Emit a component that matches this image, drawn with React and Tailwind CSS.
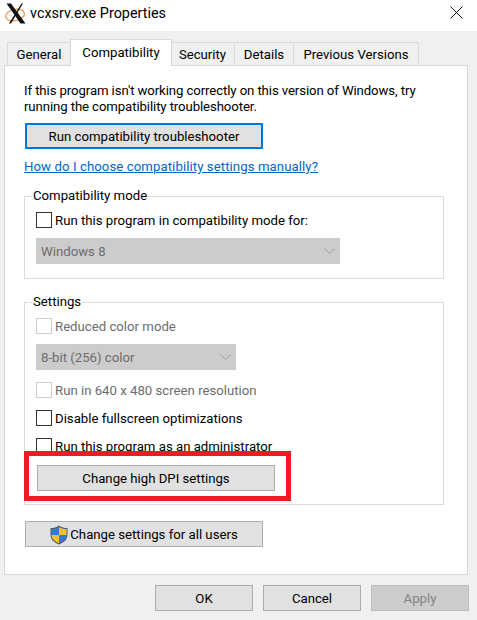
import React from "react";

const font = { fontFamily: 'Roboto, "Liberation Sans", sans-serif' };

const Chevron = () => (
  <svg width="11" height="6" viewBox="0 0 11 6" fill="none" stroke="#9f9f9f" strokeWidth="1">
    <path d="M0.5 0.5 L5.5 5.5 L10.5 0.5" />
  </svg>
);

const XLogo = () => (
  <svg width="22" height="22" viewBox="0 0 22 22" fill="none">
    <ellipse cx="11" cy="13" rx="9.5" ry="5.6" stroke="#ee9c4f" strokeWidth="1.3" transform="rotate(-12 11 13)" />
    <path d="M2.5 1.5 L7 1.5 L21.5 21.5 L16.5 21.5 Z" fill="#111" />
    <path d="M17.5 1.5 L19 1.5 L7 21.5 L5 21.5 Z" fill="#111" />
  </svg>
);

const Shield = () => (
  <svg width="18" height="20" viewBox="0 0 18 20">
    <path d="M9 0.5 C6.5 2.5 3.5 3 0.5 3 L0.5 10 C0.5 14.5 4 17.5 9 19.5 C14 17.5 17.5 14.5 17.5 10 L17.5 3 C14.5 3 11.5 2.5 9 0.5 Z" fill="#4b5f77" />
    <path d="M9 2 C7 3.5 4.5 4 1.5 4 L1.5 10 L9 10 Z" fill="#2a7fd4" />
    <path d="M9 2 C11 3.5 13.5 4 16.5 4 L16.5 10 L9 10 Z" fill="#f5c02e" />
    <path d="M1.5 10 C1.5 13.8 4.6 16.4 9 18.3 L9 10 Z" fill="#f5c02e" />
    <path d="M16.5 10 C16.5 13.8 13.4 16.4 9 18.3 L9 10 Z" fill="#2a7fd4" />
  </svg>
);

function Tab({ label, width, active }) {
  if (active) {
    return (
      <div className="relative z-10 -mb-px -mx-px h-[27px] bg-white border border-b-0 border-[#d9d9d9] flex items-center justify-center text-black pb-[1px]" style={{ width }}>
        {label}
      </div>
    );
  }
  return (
    <div className="h-[23px] bg-[#f0f0f0] border border-b-0 border-[#d9d9d9] -ml-px first:ml-0 flex items-center justify-center text-black pt-[2px]" style={{ width }}>
      {label}
    </div>
  );
}

function Check({ label, disabled }) {
  return (
    <div className={`flex items-center h-4 ${disabled ? "text-[#6d6d6d]" : "text-black"}`}>
      <span className={`w-4 h-4 shrink-0 border bg-white ${disabled ? "border-[#cccccc]" : "border-[#333333]"}`} />
      <span className="ml-[3px] mt-[2px] whitespace-nowrap">{label}</span>
    </div>
  );
}

function Btn({ className = "", tone = "bg-[#e1e1e1] border border-[#adadad] text-black", children }) {
  return (
    <div className={`h-[26px] pt-[2px] flex items-center justify-center whitespace-nowrap ${tone} ${className}`}>
      {children}
    </div>
  );
}

function Combo({ className = "", label }) {
  return (
    <div className={`h-[26px] bg-[#cccccc] flex items-center justify-between pl-[5px] pr-[5px] text-[#6d6d6d] ${className}`}>
      <span className="mt-[2px]">{label}</span>
      <Chevron />
    </div>
  );
}

export default function App() {
  return (
    <div className="w-[477px] h-[620px] overflow-hidden bg-[#f0f0f0] text-[13.2px] leading-4" style={font}>
      {/* Title bar */}
      <div className="h-[31px] bg-white flex items-center pl-1 pr-[14px] pb-[6px]">
        <XLogo />
        <span className="ml-1 mt-[2px] text-[14.4px] text-black">vcxsrv.exe Properties</span>
        <svg className="ml-auto" width="13" height="13" viewBox="0 0 13 13" stroke="#111" strokeWidth="1" fill="none">
          <path d="M0.5 0.5 L12.5 12.5 M12.5 0.5 L0.5 12.5" />
        </svg>
      </div>

      {/* Tabs */}
      <div className="h-[34px] pl-[7px] flex items-end">
        <Tab label="General" width={64} />
        <Tab label="Compatibility" width={102} active />
        <Tab label="Security" width={65} />
        <Tab label="Details" width={60} />
        <Tab label="Previous Versions" width={126} />
      </div>

      {/* Panel */}
      <div className="ml-1 w-[464px] h-[510px] bg-white border border-[#d9d9d9] pl-[19px] pt-[17px]">
        <p className="text-black whitespace-nowrap tracking-[-0.1px]">
          If this program isn't working correctly on this version of Windows, try
          <br />
          running the compatibility troubleshooter.
        </p>
        <Btn className="mt-[8px] ml-px w-[238px]" tone="bg-[#e1e1e1] border-2 border-[#0078d7] text-black">Run compatibility troubleshooter</Btn>
        <a className="block mt-[10px] text-[#0066cc] underline tracking-[0.08px]">How do I choose compatibility settings manually?</a>

        <fieldset className="mt-[13px] w-[420px] h-[91px] border border-[#dcdcdc] pl-[11px]">
          <legend className="-ml-[4px] px-px leading-4 text-black">Compatibility mode</legend>
          <div className="mt-2">
            <Check label="Run this program in compatibility mode for:" />
          </div>
          <Combo className="mt-[10px] w-[304px]" label="Windows 8" />
        </fieldset>

        <fieldset className="mt-[15px] w-[420px] h-[211px] border border-[#dcdcdc] pl-[11px]">
          <legend className="-ml-[4px] px-px leading-4 text-black">Settings</legend>
          <div className="mt-2">
            <Check label="Reduced color mode" disabled />
          </div>
          <Combo className="mt-[10px] w-[200px]" label="8-bit (256) color" />
          <div className="mt-3">
            <Check label="Run in 640 x 480 screen resolution" disabled />
          </div>
          <div className="mt-3">
            <Check label="Disable fullscreen optimizations" />
          </div>
          <div className="mt-3">
            <Check label="Run this program as an administrator" />
          </div>
          <div className="relative mt-[11px] ml-px w-[238px]">
            <Btn>Change high DPI settings</Btn>
            <div className="absolute -left-[13px] -top-[14px] w-[267px] h-[50px] border-[5px] border-[#ed1c24] pointer-events-none" />
          </div>
        </fieldset>

        <Btn className="mt-4 ml-px w-[238px]">
          <Shield />
          <span className="ml-[2px]">Change settings for all users</span>
        </Btn>
      </div>

      {/* Footer */}
      <div className="mt-[10px] pl-[155px] flex gap-[10px]">
        <Btn className="w-[98px]">OK</Btn>
        <Btn className="w-[98px]">Cancel</Btn>
        <Btn className="w-[98px]" tone="bg-[#cccccc] border border-[#bfbfbf] text-[#838383]">Apply</Btn>
      </div>
    </div>
  );
}
